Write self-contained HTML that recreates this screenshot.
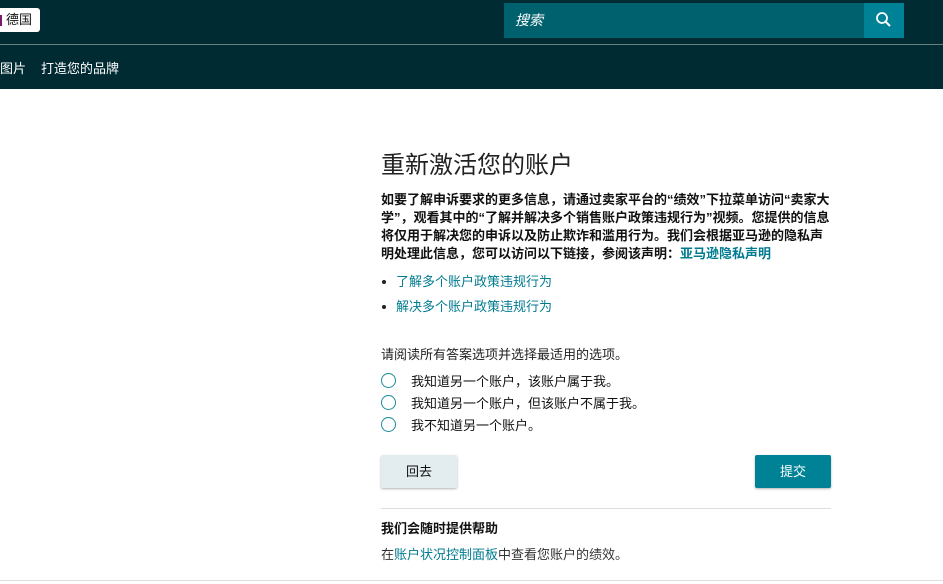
<!DOCTYPE html><html><head><meta charset="utf-8"><style>
*{margin:0;padding:0;box-sizing:border-box}
body{width:943px;height:584px;overflow:hidden;background:#fff;font-family:"Liberation Sans","Noto Sans CJK SC",sans-serif;color:#111;position:relative}
.top{position:absolute;left:0;top:0;width:943px;height:89px;background:#002b33}
.hr{position:absolute;left:0;top:44px;width:943px;height:1px;background:#6b7f83}
.flag{position:absolute;left:-4px;top:8px;width:44px;height:24px;background:#fff;border-radius:3px;font-size:13px;line-height:24px;padding-left:10px;color:#111}
.flag:before{content:"";position:absolute;left:4px;top:7px;width:2px;height:11px;background:#7a1a6a}
.search{position:absolute;left:504px;top:3px;width:360px;height:35px;background:#00616e;color:#fff;font-style:italic;font-size:14px;line-height:35px;padding-left:11px}
.sbtn{position:absolute;left:864px;top:3px;width:40px;height:35px;background:#008296}
.nav{position:absolute;top:58px;font-size:13px;color:#fff}
.c{position:absolute;left:381px;width:460px}
a{color:#007b8f;text-decoration:none}
.radio{position:absolute;left:381px;width:15px;height:15px;border:1.5px solid #1a8a9a;border-radius:50%}
.rl{position:absolute;left:411px;font-size:13px}
.btn{position:absolute;top:455px;height:33px;font-size:13px;line-height:33px;text-align:center;border-radius:2px;box-shadow:0 1px 2px rgba(0,0,0,.3)}
.b{position:absolute;left:382px;width:4px;height:4px;border-radius:50%;background:#222}
</style></head><body>
<div class="top"></div><div class="hr"></div>
<div class="flag">德国</div>
<div class="search">搜索</div>
<div class="sbtn"><svg width="40" height="35" viewBox="0 0 40 35"><circle cx="18" cy="15" r="5" fill="none" stroke="#fff" stroke-width="1.8"/><path d="M21.5 18.5L26 23" stroke="#fff" stroke-width="2"/></svg></div>
<div class="nav" style="left:0">图片</div>
<div class="nav" style="left:41px">打造您的品牌</div>
<div class="c" style="top:145px;font-size:24px;color:#222">重新激活您的账户</div>
<div class="c" style="top:191px;width:452px;font-size:13px;font-weight:bold;line-height:18px">如要了解申诉要求的更多信息，请通过卖家平台的“绩效”下拉菜单访问“卖家大学”，观看其中的“了解并解决多个销售账户政策违规行为”视频。您提供的信息将仅用于解决您的申诉以及防止欺诈和滥用行为。我们会根据亚马逊的隐私声明处理此信息，您可以访问以下链接，参阅该声明：<a>亚马逊隐私声明</a></div>
<div class="b" style="top:280px"></div><div class="c" style="left:396px;top:271px;font-size:13px"><a>了解多个账户政策违规行为</a></div>
<div class="b" style="top:305px"></div><div class="c" style="left:396px;top:296px;font-size:13px"><a>解决多个账户政策违规行为</a></div>
<div class="c" style="top:344px;font-size:13px;color:#222">请阅读所有答案选项并选择最适用的选项。</div>
<div class="radio" style="top:373px"></div><div class="rl" style="top:371px">我知道另一个账户，该账户属于我。</div>
<div class="radio" style="top:395px"></div><div class="rl" style="top:393px">我知道另一个账户，但该账户不属于我。</div>
<div class="radio" style="top:417px"></div><div class="rl" style="top:415px">我不知道另一个账户。</div>
<div class="btn" style="left:381px;width:76px;background:#e3ecee">回去</div>
<div class="btn" style="left:755px;width:76px;background:#008296;color:#fff">提交</div>
<div style="position:absolute;left:381px;top:508px;width:450px;height:1px;background:#ddd"></div>
<div class="c" style="top:518px;font-size:13px;font-weight:bold">我们会随时提供帮助</div>
<div class="c" style="top:544px;font-size:13px;color:#333">在<a>账户状况控制面板</a>中查看您账户的绩效。</div>
<div style="position:absolute;left:0;top:580px;width:943px;height:1px;background:#ddd"></div>
</body></html>
